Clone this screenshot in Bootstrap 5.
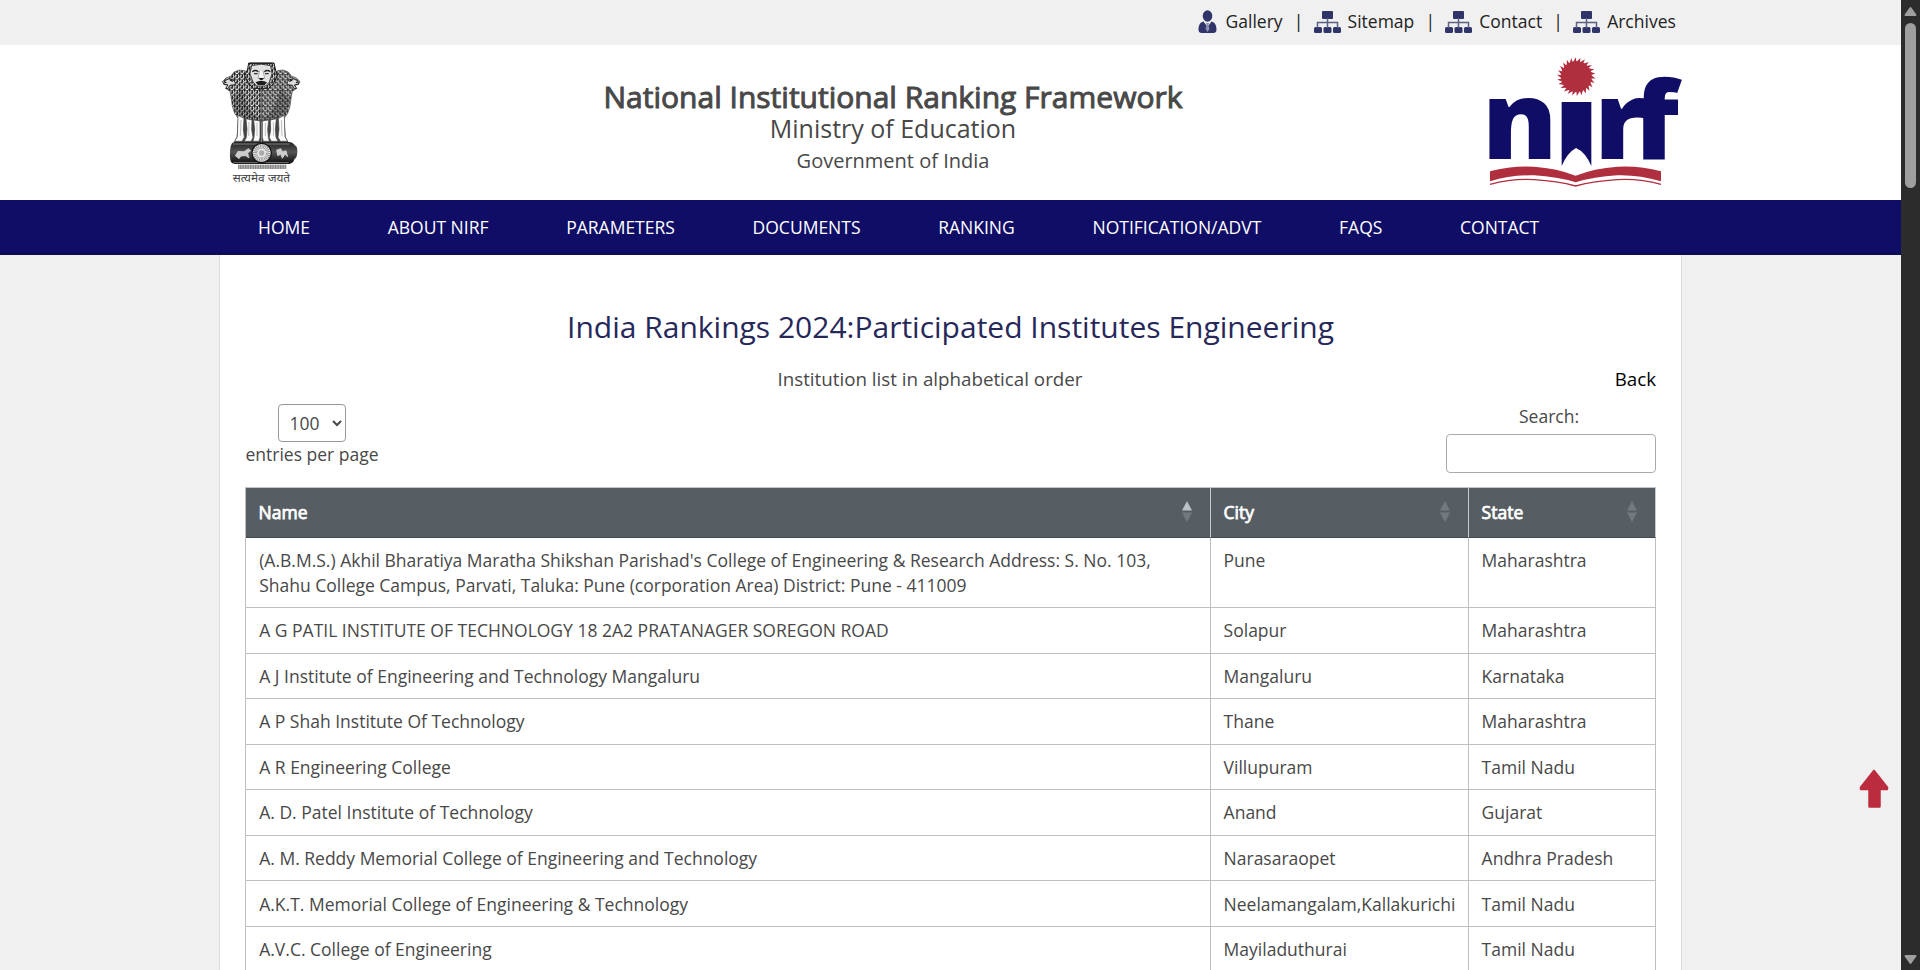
<!DOCTYPE html>
<html lang="en">
<head>
<meta charset="utf-8">
<title>National Institutional Ranking Framework</title>
<link href="https://cdn.jsdelivr.net/npm/bootstrap@5.3.0/dist/css/bootstrap.min.css" rel="stylesheet">
<script src="https://cdn.jsdelivr.net/npm/bootstrap@5.3.0/dist/js/bootstrap.bundle.min.js"></script>
<style>
  body { font-family: "Open Sans", sans-serif; font-size: 17.5px; line-height: 25px; color: #484848; background: #f0f0f0; }
  a { color: inherit; text-decoration: none; }
  .viewport { height: 970px; }
  .wrap { width: 1461px; margin: 0 auto; }
  .top-bar { height: 45px; color: #222; padding-top: 1px; }
  .top-bar .wrap { padding-right: 5.2px; }
  .top-bar svg { display: block; margin-right: 7px; }
  .top-bar svg:first-child { margin-right: 8.5px; }
  .top-bar .sep { margin: 0 10.2px 0 11.2px; }
  .masthead { height: 155px; background: #fff; }
  .masthead .wrap { width: 1481px; }
  .masthead .emblem { margin-top: 5px; }
  .masthead .logo { margin-right: -9px; }
  .titles { padding-top: 37px; padding-left: 6px; }
  .faux-bold { font-weight: 400; -webkit-text-stroke: .95px currentColor; }
  .t1 { font-size: 30px; line-height: 30px; }
  .t2 { font-size: 25px; line-height: 32px; }
  .t3 { font-size: 20px; line-height: 33px; }
  .main-nav { height: 55px; background: #0f0d66; border-bottom: 3px solid #0d0c59; color: #fff; padding-top: 2px; }
  .main-nav .nav { height: 50px; gap: 77.7px; padding-left: 38px; }
  .sheet { width: 1463px; background: #fff; border: solid #dcdcdc; border-width: 0 1px; padding: 54px 25px 0; height: 715px; }
  .sheet h2 { font-size: 30px; line-height: 36px; color: #26285a; }
  .sub { font-size: 18.75px; line-height: 26px; margin-top: 20.5px; }
  .sub .mid { margin-left: 532.5px; white-space: nowrap; }
  .len { width: 134px; margin-top: 12px; }
  .len select { width: 68px; height: 38px; font: inherit; color: inherit; background: #fff; border: 1px solid #999; border-radius: 4px; padding: 0 1px 0 6.5px; }
  .find { width: 210px; margin-top: 12.5px; }
  .find label { padding-right: 4px; }
  .find input { height: 39px; margin-top: 4.5px; border: 1px solid #aaa; border-radius: 4px; padding: 6px; }
  .grid { border-collapse: separate; border-spacing: 0; table-layout: fixed; margin-top: 14px; border-top: 1px solid #c3c6c8; border-left: 1px solid #bfbfbf; }
  .grid th, .grid td { border: solid #bfbfbf; border-width: 0 1px 1px 0; padding: 10.2px 12px 9.36px 12.6px; vertical-align: top; white-space: nowrap; }
  .grid td:first-child { white-space: normal; padding-left: 13.2px; }
  .grid th { background: #575e63; color: #fff; height: 50px; font-weight: 400; padding: 12.500px 18px 11.500px 12.6px; border-right-color: #c9cccd; border-bottom-color: #45494c; line-height: 25px; }
  .grid th svg { margin-top: 1px; }
  .grid th span { -webkit-text-stroke: .75px #fff; }
  .scroll { width: 19px; background: #2c2c2c; }
  .thumb { width: 11px; height: 165px; border-radius: 6px; background: #9f9f9f; }
  .to-top { position: absolute; right: 12px; top: 769px; }
</style>
</head>
<body class="overflow-hidden">
<svg width="0" height="0" class="position-absolute">
  <symbol id="tree" viewBox="0 0 27 23"><g fill="#2f3568"><rect x="8" y="1" width="11" height="8" rx="1"/><rect x="0" y="17" width="8" height="6" rx="1.5"/><rect x="9.500" y="17" width="8" height="6" rx="1.5"/><rect x="19" y="17" width="8" height="6" rx="1.5"/></g><path d="M13.500 8v10M3.500 18v-5.500h20V18" fill="none" stroke="#5a6083" stroke-width="1.500"/></symbol>
  <symbol id="up" viewBox="0 0 10 21"><path d="M0 9.500 5 0l5 9.500z"/></symbol>
  <symbol id="down" viewBox="0 0 10 21"><path d="M0 11.500 5 21l5-9.500z"/></symbol>
</svg>
<div class="viewport d-flex">
  <div class="flex-grow-1 position-relative overflow-hidden">
    <div class="top-bar"><div class="wrap d-flex justify-content-end align-items-center h-100 pb-1">
      <svg width="19" height="23" viewBox="0 0 19 23"><g fill="#2f3568"><ellipse cx="9.500" cy="6" rx="4.800" ry="5.800"/><path d="M.5 20c0-5 1.500-7.500 5-8.500L9.500 17l4-5.500c3.500 1 5 3.500 5 8.500 0 2-1.500 3-3 3H3.500c-1.500 0-3-1-3-3z"/></g><path d="M8 13h3l-.5 2 1 4-2 3-2-3 1-4z" fill="#8b90b0"/></svg><a href="#">Gallery</a><span class="sep">|</span>
      <svg width="27" height="23"><use href="#tree"/></svg><a href="#">Sitemap</a><span class="sep">|</span>
      <svg width="27" height="23"><use href="#tree"/></svg><a href="#">Contact</a><span class="sep">|</span>
      <svg width="27" height="23"><use href="#tree"/></svg><a href="#">Archives</a>
    </div></div>

    <header class="masthead"><div class="wrap d-flex">
      <svg class="emblem flex-shrink-0" width="100" height="145" viewBox="0 0 300 435">
        <defs>
          <pattern id="mane" width="15" height="16" patternUnits="userSpaceOnUse"><rect width="15" height="16" fill="#222"/><path d="M2 1q0 6 4 6t4-5M10 9q0 6 4 6M-5 9q0 6 4 6t4-5M9-1l4 4M1 10l4 4" fill="none" stroke="#f4f4f4" stroke-width="2.800"/></pattern>
          <pattern id="hatch" width="5" height="10" patternUnits="userSpaceOnUse"><rect width="5" height="10" fill="#bbb"/><path d="M1 0v10" stroke="#666" stroke-width="2"/></pattern>
          <linearGradient id="drum" x2="0" y2="1"><stop offset="0" stop-color="#222"/><stop offset=".45" stop-color="#555"/><stop offset="1" stop-color="#0c0c0c"/></linearGradient>
          <g id="half">
            <path d="M118 72 104 62 88 60 72 66 63 78 48 84 37 95 42 104 55 106 48 116 60 124 63 140 67 168 74 190 84 204 153 214V70z" fill="url(#mane)" stroke="#444" stroke-width="2"/>
            <path d="M44 92q12-9 24-3 10 6 8 15l-16 2-6 10-7-1 7-10-13-3z" fill="#ddd" stroke="#222" stroke-width="3"/>
            <path d="M60 90l9 4M44 96l5 2" stroke="#111" stroke-width="4"/>
            <path d="M96 104q4 44 26 78 10 16 31 24v8l-69-10q-14-30-18-62 14 6 30-38z" fill="#111" opacity=".28"/>
            <path d="M84 202 80 262l-8 14h81v-64z" fill="#444"/>
            <path d="M84 196l18 9-2 33 3 24-7 12H74l8-14zM108 206l18 4-1 29 4 24-6 11h-20l6-12 2-24zM131 210l19 3v49l-3 12h-18l3-12 2-24z" fill="#fafafa" stroke="#444" stroke-width="2"/>
            <path d="M93 210l-2 48M117 216l-1 42M141 218v40" stroke="#b5b5b5" stroke-width="2.500"/>
          </g>
        </defs>
        <use href="#half"/><use href="#half" transform="translate(307) scale(-1 1)"/>
        <path d="M116 39h76l4 18 6 20-12 24-14 14h-46l-14-14-12-24 9-20z" fill="url(#mane)" stroke="#1c1c1c" stroke-width="3"/>
        <path d="M125 47q29-9 57 0l4 24-8 25-11 12h-27l-11-12-9-25z" fill="#e2e2e2" stroke="#444" stroke-width="3"/>
        <path d="M120 40h67M127 65q9-7 18 0M163 65q9-7 18 0" fill="none" stroke="#222" stroke-width="4"/>
        <path d="M132 71h11M165 71h11" stroke="#333" stroke-width="4"/>
        <path d="M149 62l-5 23h20l-5-23" fill="#f6f6f6" stroke="#888" stroke-width="2"/>
        <path d="M146 84h16l-5 6h-6zM136 97q18-9 35 0l-7 8h-20z" fill="#1c1c1c"/>
        <path d="M72 276h164q14 1 18 10 9 3 8 20-1 18-9 22-3 13-17 14H74q-11-2-13-13-3-20 1-40 2-10 10-13z" fill="url(#drum)"/>
        <path d="M69 282h170M70 338h166" stroke="#aaa" stroke-width="2"/>
        <path d="M76 317l8-13 18 1 13-9 7 6-9 7 4 15-10-7-14 1-6 8zM200 300l12-4 6 9 10-3 5 18-8-7-8 12-5-12-9 4z" fill="#ccc" stroke="#ddd" stroke-width="2"/>
        <circle cx="155" cy="309" r="29" fill="#e6e6e6" stroke="#111" stroke-width="4"/>
        <circle cx="155" cy="309" r="20" fill="none" stroke="#8e8e8e" stroke-width="14" stroke-dasharray="2.500 2.700"/>
        <circle cx="155" cy="309" r="8" fill="#aaa"/>
        <rect x="84" y="344" width="145" height="13" fill="url(#hatch)"/>
        <text x="68" y="395" font-size="33" font-family="'Open Sans','Noto Sans',sans-serif" fill="#444" textLength="172" lengthAdjust="spacingAndGlyphs">सत्यमेव जयते</text>
      </svg>
      <div class="titles flex-grow-1 text-center">
        <h1 class="t1 faux-bold m-0">National Institutional Ranking Framework</h1>
        <div class="t2">Ministry of Education</div>
        <div class="t3">Government of India</div>
      </div>
      <svg class="logo flex-shrink-0" width="230" height="155" viewBox="0 0 690 465">
        <g fill="#0f0d66" font-family="'Open Sans',sans-serif" font-weight="800" font-size="322">
          <text transform="translate(36 343) scale(1.050 1)">n</text>
          <text transform="translate(373 343) scale(1.050 1)" x="0 109">rf</text>
          <path d="M275 171h89v192q-18-42-46-54-26 14-43 54z"/>
        </g>
        <g fill="#b02f3f">
          <circle cx="319" cy="95" r="46"/>
          <path id="rays"/>
          <path d="M60 379q65-18 132-14 70 5 125 27 55-22 125-27 67-4 131 14v30q-66-20-131-18-70 4-125 21-55-17-125-21-66-2-132 18z"/>
        </g>
        <path d="M60 418q66-18 132-14 70 4 125 19 55-15 125-19 65-4 131 14" fill="none" stroke="#b02f3f" stroke-width="4"/>
      </svg>
    </div></header>

    <nav class="main-nav"><div class="wrap"><div class="nav align-items-center flex-nowrap text-nowrap">
      <a href="#">HOME</a><a href="#">ABOUT NIRF</a><a href="#">PARAMETERS</a><a href="#">DOCUMENTS</a><a href="#">RANKING</a><a href="#">NOTIFICATION/ADVT</a><a href="#">FAQS</a><a href="#">CONTACT</a>
    </div></div></nav>

    <main class="wrap sheet">
      <h2 class="text-center m-0 fw-normal">India Rankings 2024:Participated Institutes Engineering</h2>
      <div class="sub d-flex justify-content-between"><span class="mid">Institution list in alphabetical order</span><a href="#" class="text-black">Back</a></div>
      <div class="d-flex justify-content-between align-items-start">
        <div class="len d-flex flex-column align-items-center text-nowrap"><select><option>100</option></select><label>entries per page</label></div>
        <div class="find text-center"><label class="d-block">Search:</label><input class="w-100 d-block" type="search"></div>
      </div>
      <table class="grid w-100">
        <colgroup><col style="width:965px"><col style="width:258px"><col></colgroup>
        <thead><tr>
          <th><div class="d-flex justify-content-between"><span>Name</span><svg width="10" height="21" fill="#737a7f"><use href="#up" fill="#bcc1c5"/><use href="#down"/></svg></div></th>
          <th><div class="d-flex justify-content-between"><span>City</span><svg width="10" height="21" fill="#737a7f"><use href="#up"/><use href="#down"/></svg></div></th>
          <th><div class="d-flex justify-content-between"><span>State</span><svg width="10" height="21" fill="#737a7f"><use href="#up"/><use href="#down"/></svg></div></th>
        </tr></thead>
        <tbody>
          <tr><td>(A.B.M.S.) Akhil Bharatiya Maratha Shikshan Parishad's College of Engineering &amp; Research Address: S. No. 103, Shahu College Campus, Parvati, Taluka: Pune (corporation Area) District: Pune - 411009</td><td>Pune</td><td>Maharashtra</td></tr>
          <tr><td>A G PATIL INSTITUTE OF TECHNOLOGY 18 2A2 PRATANAGER SOREGON ROAD</td><td>Solapur</td><td>Maharashtra</td></tr>
          <tr><td>A J Institute of Engineering and Technology Mangaluru</td><td>Mangaluru</td><td>Karnataka</td></tr>
          <tr><td>A P Shah Institute Of Technology</td><td>Thane</td><td>Maharashtra</td></tr>
          <tr><td>A R Engineering College</td><td>Villupuram</td><td>Tamil Nadu</td></tr>
          <tr><td>A. D. Patel Institute of Technology</td><td>Anand</td><td>Gujarat</td></tr>
          <tr><td>A. M. Reddy Memorial College of Engineering and Technology</td><td>Narasaraopet</td><td>Andhra Pradesh</td></tr>
          <tr><td>A.K.T. Memorial College of Engineering &amp; Technology</td><td>Neelamangalam,Kallakurichi</td><td>Tamil Nadu</td></tr>
          <tr><td>A.V.C. College of Engineering</td><td>Mayiladuthurai</td><td>Tamil Nadu</td></tr>
        </tbody>
      </table>
    </main>
    <a href="#" class="to-top"><svg class="d-block" width="30" height="40" viewBox="0 0 30 40"><path d="M15 2 28 18.500V20H20.500V37.500H10.500V20H2v-1.500z" fill="#bb2d3e" stroke="#bb2d3e" stroke-width="2.500" stroke-linejoin="round"/></svg></a>
  </div>
  <div class="scroll d-flex flex-column align-items-center">
    <svg width="13" height="23" viewBox="0 0 13 23"><path d="M1.500 15 6.500 8l5 7z" fill="#9f9f9f" stroke="#9f9f9f" stroke-width="2" stroke-linejoin="round"/></svg>
    <div class="thumb"></div>
    <svg class="mt-auto" width="13" height="16" viewBox="0 0 13 16"><path d="M1.500 2h10l-5 7z" fill="#9f9f9f" stroke="#9f9f9f" stroke-width="2" stroke-linejoin="round"/></svg>
  </div>
</div>
<script>
  // Curved rays of the sun in the logo
  const n = 26, pt = (r, a) => (319 + r * Math.cos(a)).toFixed(1) + ' ' + (95 + r * Math.sin(a)).toFixed(1);
  let d = '';
  for (let i = 0; i < n; i++) {
    const a = i * 2 * Math.PI / n, s = Math.PI / n;
    d += 'M' + pt(44, a - s) + 'L' + pt(58, a + s * .8) + 'L' + pt(44, a + s) + 'z';
  }
  document.getElementById('rays').setAttribute('d', d);
</script>
</body>
</html>
